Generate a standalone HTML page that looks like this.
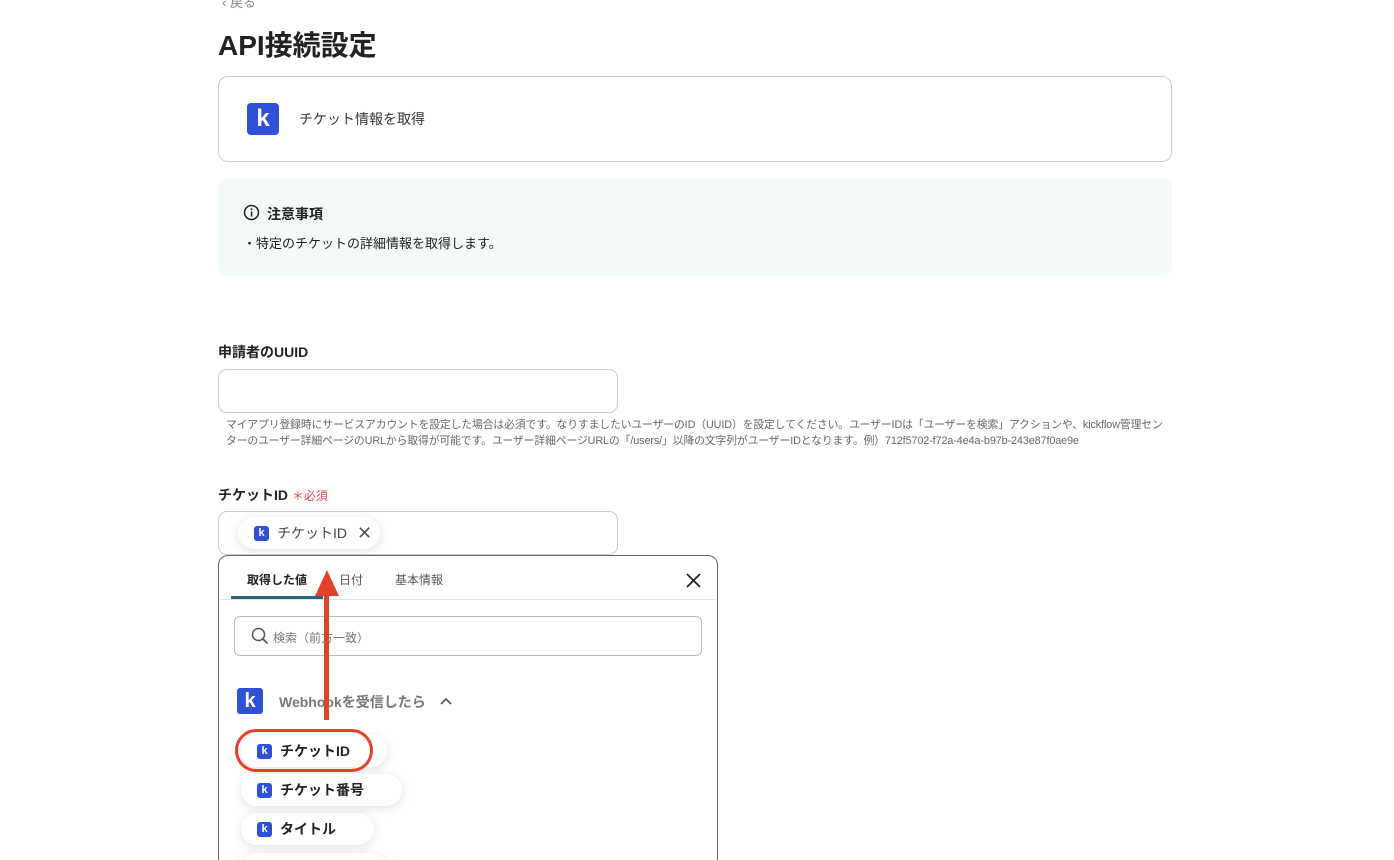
<!DOCTYPE html>
<html style="width:1394px;height:860px;overflow:hidden"><head><meta charset="utf-8"><style>
*{box-sizing:border-box;margin:0;padding:0}
body{width:1394px;height:860px;overflow:hidden;background:#fff;font-family:"Liberation Sans","Noto Sans CJK JP",sans-serif;color:#222;position:relative}
.a{position:absolute}
.k{display:inline-flex;align-items:center;justify-content:center;background:#3050d8;color:#fff;font-weight:bold;border-radius:3px;font-family:"Liberation Sans",sans-serif}
.chip{position:absolute;height:32px;border-radius:16px;background:#fff;box-shadow:0 2px 10px rgba(0,0,0,.12);display:flex;align-items:center;padding-left:16px;font-size:14px;font-weight:bold;color:#222}
.chip .k{width:15px;height:15px;font-size:11px;margin-right:8px}
</style></head><body>
<div class="a" style="left:222px;top:-8px;font-size:13px;color:#888">‹ 戻る</div>
<div class="a" style="left:218px;top:24px;font-size:28px;font-weight:bold;color:#222">API接続設定</div>
<div class="a" style="left:218px;top:76px;width:954px;height:86px;border:1px solid #ccc;border-radius:10px"></div>
<div class="a k" style="left:247px;top:103px;width:32px;height:32px;font-size:24px;border-radius:4px">k</div>
<div class="a" style="left:299px;top:109px;font-size:14px;color:#333">チケット情報を取得</div>
<div class="a" style="left:218px;top:178px;width:954px;height:98px;background:#f4f9f9;border-radius:10px"></div>
<svg class="a" style="left:243px;top:204px" width="17" height="17" viewBox="0 0 17 17"><circle cx="8.5" cy="8.5" r="7" fill="none" stroke="#222" stroke-width="1.5"/><rect x="7.8" y="7.5" width="1.5" height="5" fill="#222"/><circle cx="8.5" cy="5.3" r="1" fill="#222"/></svg>
<div class="a" style="left:267px;top:204px;font-size:14px;font-weight:bold">注意事項</div>
<div class="a" style="left:243px;top:233px;font-size:13px">・特定のチケットの詳細情報を取得します。</div>
<div class="a" style="left:218px;top:342px;font-size:14px;font-weight:bold">申請者のUUID</div>
<div class="a" style="left:218px;top:369px;width:400px;height:44px;border:1px solid #ccc;border-radius:9px"></div>
<div class="a" style="left:226px;top:417px;font-size:10.8px;color:#666;line-height:16px;white-space:nowrap;letter-spacing:-0.1px">マイアプリ登録時にサービスアカウントを設定した場合は必須です。なりすましたいユーザーのID（UUID）を設定してください。ユーザーIDは「ユーザーを検索」アクションや、kickflow管理セン<br>ターのユーザー詳細ページのURLから取得が可能です。ユーザー詳細ページURLの「/users/」以降の文字列がユーザーIDとなります。例）712f5702-f72a-4e4a-b97b-243e87f0ae9e</div>
<div class="a" style="left:218px;top:485px;font-size:14px;font-weight:bold">チケットID <span style="color:#e5484d;font-size:12px;font-weight:normal">＊必須</span></div>
<div class="a" style="left:218px;top:511px;width:400px;height:44px;border:1px solid #ccc;border-radius:9px"></div>
<div class="chip" style="left:238px;top:517px;width:142px;font-weight:normal;color:#444">
<span class="k">k</span>チケットID<span style="margin-left:10px;font-size:18px;color:#555">✕</span></div>
<div class="a" style="left:218px;top:555px;width:500px;height:320px;border:1px solid #666;border-radius:10px;background:#fff"></div>
<div class="a" style="left:247px;top:571px;font-size:12px;font-weight:bold">取得した値</div>
<div class="a" style="left:339px;top:571px;font-size:12px;color:#555">日付</div>
<div class="a" style="left:395px;top:571px;font-size:12px;color:#555">基本情報</div>
<div class="a" style="left:221px;top:599px;width:494px;height:1px;background:#e2e2e2"></div>
<div class="a" style="left:231px;top:596px;width:92px;height:3px;background:#2e6378"></div>
<svg class="a" style="left:685px;top:572px" width="17" height="17" viewBox="0 0 17 17"><path d="M2 2L15 15M15 2L2 15" stroke="#222" stroke-width="1.8"/></svg>
<div class="a" style="left:234px;top:616px;width:468px;height:40px;border:1px solid #bbb;border-radius:6px"></div>
<svg class="a" style="left:251px;top:627px" width="18" height="18" viewBox="0 0 18 18"><circle cx="7.5" cy="7.5" r="6" fill="none" stroke="#555" stroke-width="1.5"/><path d="M12 12l4.5 4.5" stroke="#555" stroke-width="1.6"/></svg>
<div class="a" style="left:273px;top:629px;font-size:12px;color:#777">検索（前方一致）</div>
<div class="a k" style="left:237px;top:688px;width:26px;height:26px;font-size:20px">k</div>
<div class="a" style="left:279px;top:692px;font-size:14px;font-weight:bold;color:#777">Webhookを受信したら</div>
<svg class="a" style="left:440px;top:697px" width="12" height="10" viewBox="0 0 12 10"><path d="M1 7l5-5 5 5" stroke="#555" stroke-width="1.6" fill="none"/></svg>
<div class="chip" style="left:241px;top:735px;width:146px"><span class="k">k</span>チケットID</div>
<div class="chip" style="left:241px;top:774px;width:161px"><span class="k">k</span>チケット番号</div>
<div class="chip" style="left:241px;top:813px;width:133px"><span class="k">k</span>タイトル</div>
<div class="chip" style="left:241px;top:853px;width:146px"></div>
<div class="a" style="left:235px;top:729px;width:138px;height:43px;border:3.5px solid #e5412a;border-radius:22px"></div>
<div class="a" style="left:324px;top:592px;width:5px;height:128px;background:#e5412a"></div>
<svg class="a" style="left:314px;top:570px" width="26" height="26" viewBox="0 0 26 26"><path d="M13 0L25 26H1Z" fill="#e5412a"/></svg>
</body></html>
